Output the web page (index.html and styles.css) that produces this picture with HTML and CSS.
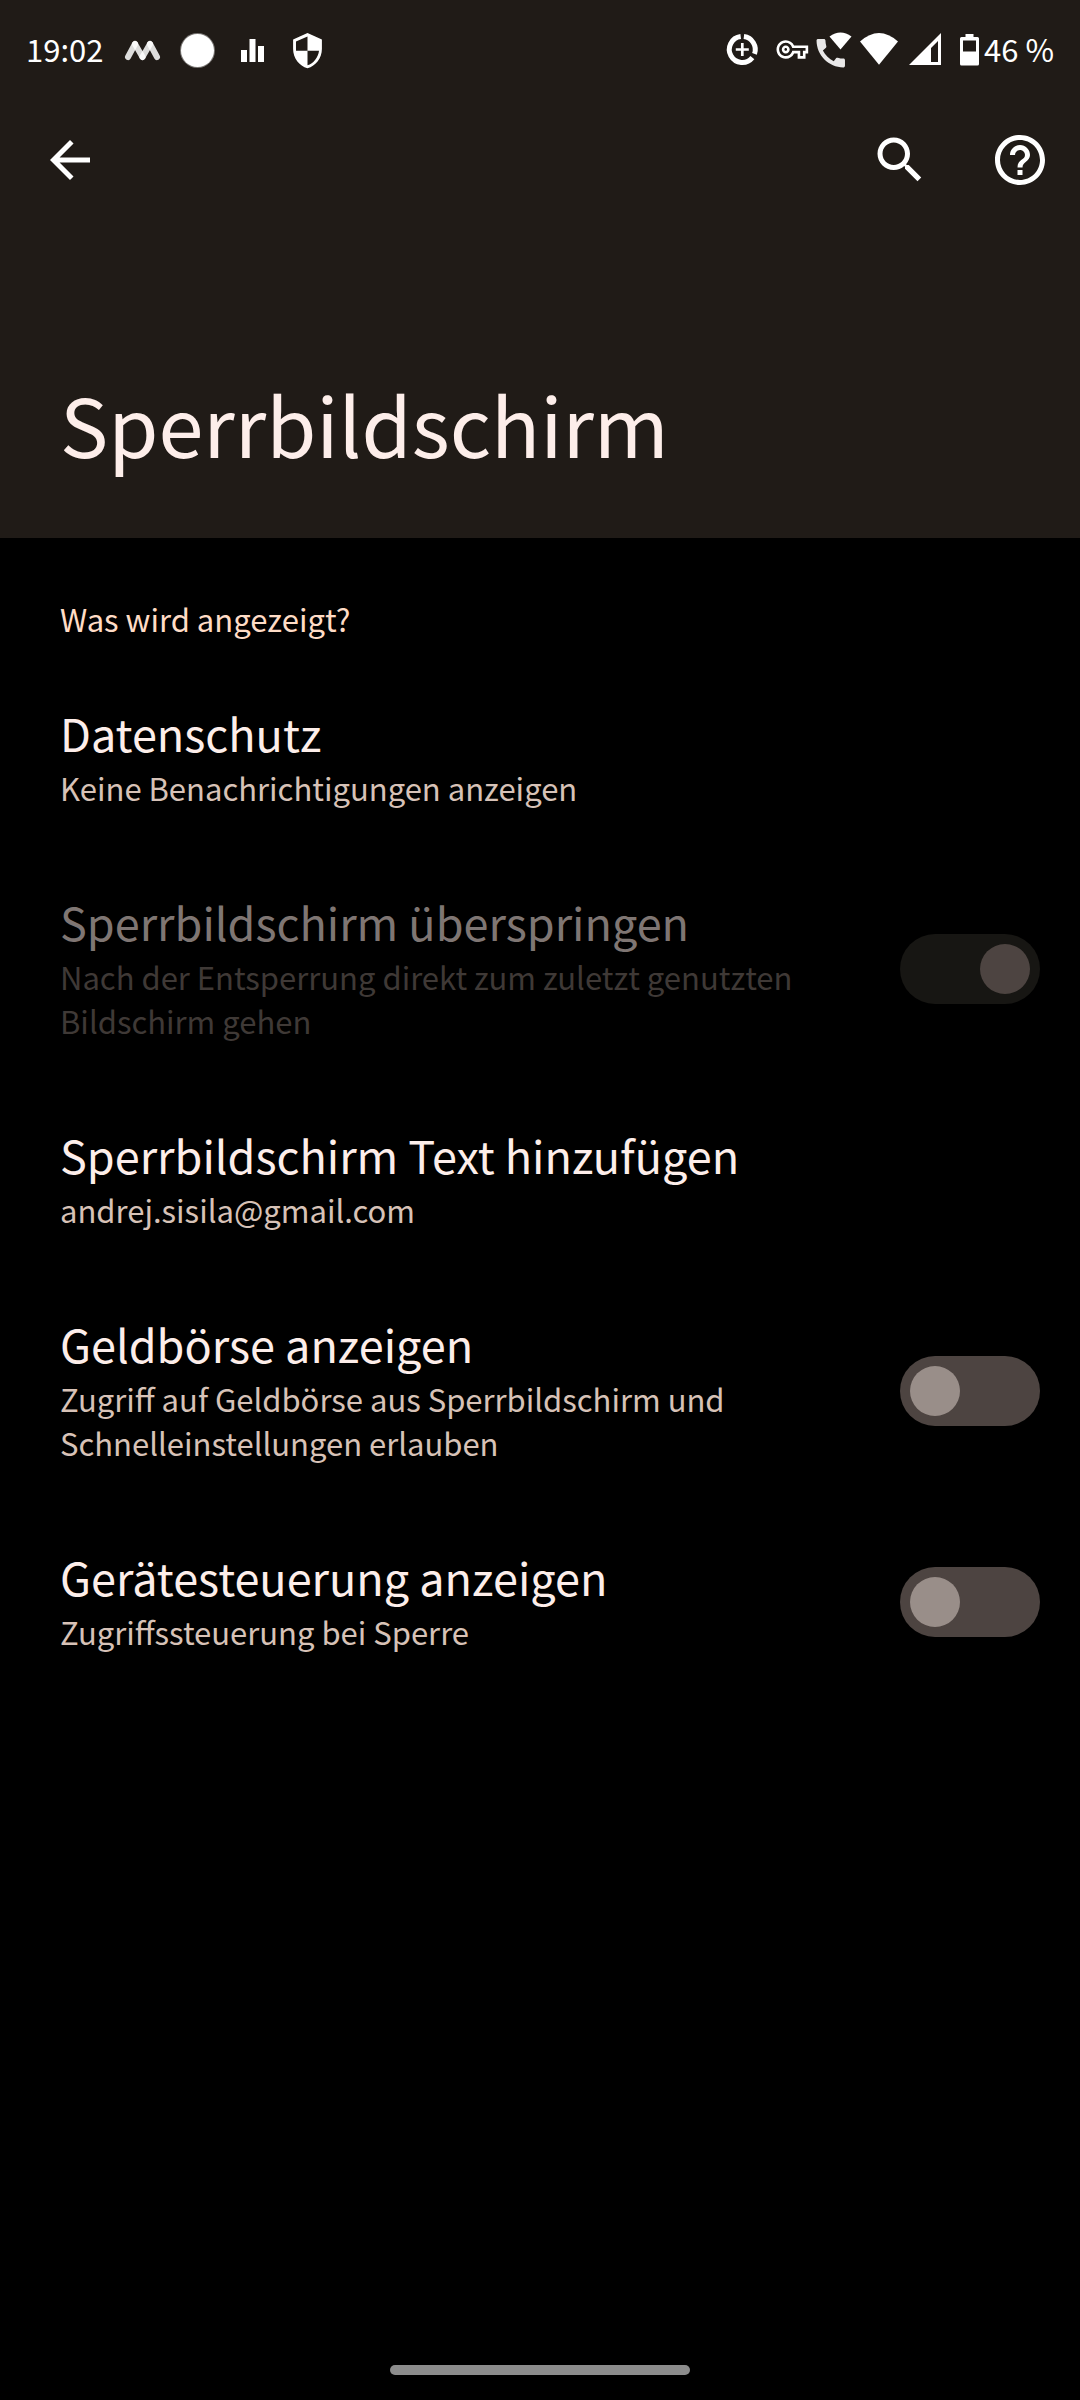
FILE: index.html
```html
<!DOCTYPE html>
<html lang="de">
<head>
<meta charset="utf-8">
<meta name="viewport" content="width=device-width">
<title>Sperrbildschirm</title>
<link rel="stylesheet" href="styles.css">
</head>
<body>
<header class="header">
  <div class="status">
    <time class="clock">19:02</time>
    <svg class="status-icon" width="55" height="44" viewBox="0 0 55 44" fill="none" stroke="#fff" stroke-width="6" stroke-linecap="round" stroke-opacity=".85"><path d="M13 29l7-13"/><path d="M20 16l7.500 13"/><path d="M27.500 29l7.500-13"/><path d="M35 16l7 13"/></svg>
    <svg class="status-icon" width="55" height="44" viewBox="0 0 55 44" fill="#fff"><circle cx="27.500" cy="22.500" r="17.500" opacity=".4"/><circle cx="27.500" cy="22.500" r="16.500"/></svg>
    <svg class="status-icon" width="55" height="44" viewBox="0 0 55 44" fill="#fff"><path d="M16 22h6v12h-6zM24.500 11h6v23h-6zM33 18h6v16h-6z"/></svg>
    <svg class="status-icon" width="55" height="44" viewBox="0 0 55 44"><g transform="translate(8.300 3.500) scale(1.6)"><path fill="#fff" fill-rule="evenodd" d="M12 1L3 5v6c0 5.550 3.840 10.740 9 12 5.160-1.260 9-6.450 9-12V5l-9-4zM12 3.100V12H4.800V6.200zM12 12h7.200c-.5 4.200-3.400 7.900-7.200 9.100z"/></g></svg>
    <span class="spacer"></span>
    <svg class="status-icon" width="50" height="44" viewBox="0 0 50 44" fill="none" stroke="#fff" stroke-width="5"><path d="M23.900 8.600A13 13 0 0 1 34.500 25.900M32.400 29.700A13 13 0 1 1 20.700 8.600"/><path stroke-width="2.700" d="M22.300 15v13M15.800 21.500h13"/></svg>
    <svg class="status-icon" width="44" height="44" viewBox="0 0 44 44" fill="#fff"><path transform="translate(6.500 5.600) scale(1.32)" d="M22 19h-6v-4h-2.680c-1.140 2.420-3.600 4-6.320 4-3.860 0-7-3.140-7-7s3.140-7 7-7c2.720 0 5.170 1.580 6.320 4H24v6h-2v4zm-4-2h2v-4h2v-2H11.940l-.23-.67C11.010 8.340 9.110 7 7 7c-2.760 0-5 2.240-5 5s2.240 5 5 5c2.110 0 4.010-1.340 4.710-3.330l.23-.67H18v4zM7 15c-1.650 0-3-1.350-3-3s1.350-3 3-3 3 1.350 3 3-1.350 3-3 3zm0-4c-.55 0-1 .45-1 1s.45 1 1 1 1-.45 1-1-.45-1-1-1z"/></svg>
    <svg class="status-icon" width="42" height="44" viewBox="0 0 42 44" fill="#fff"><path opacity=".9" transform="translate(-2.200 6.300) scale(1.58)" d="M20.010 15.380c-1.230 0-2.420-.2-3.530-.56-.35-.12-.74-.03-1.010.24l-1.570 1.970c-2.830-1.350-5.480-3.900-6.890-6.830l1.950-1.660c.27-.28.35-.67.24-1.020-.37-1.110-.56-2.300-.56-3.530 0-.54-.45-.99-.99-.99H4.190C3.650 3 3 3.240 3 3.990 3 13.280 10.730 21 20.010 21c.71 0 .99-.63.99-1.180v-3.450c0-.54-.45-.99-.99-.99z"/><path d="M26.500 21.500L15.500 8.500Q26.500 .5 37.500 8.500z"/></svg>
    <svg class="status-icon" width="46" height="44" viewBox="0 0 46 44" fill="#fff"><path d="M23 36.700L4 13.500Q23-3.500 42 13.500z"/></svg>
    <svg class="status-icon" width="46" height="44" viewBox="0 0 46 44" fill="#fff"><path fill-rule="evenodd" d="M7 37L39 5v32zM29 20v14h7V13z"/></svg>
    <svg class="status-icon" width="36" height="44" viewBox="0 0 36 44" fill="#fff"><path fill-rule="evenodd" d="M17.500 6h8v3h4q1.500 0 1.500 1.500v25.500q0 1.500-1.500 1.500h-16q-1.500 0-1.500-1.500v-25.500q0-1.500 1.500-1.500h4zM15 12.500V23.500h13V12.500z"/></svg>
    <span class="battery">46 %</span>
  </div>
  <nav class="toolbar">
    <button class="icon-button" type="button" aria-label="Zurück"><svg width="60" height="60" viewBox="0 0 24 24" fill="#fff"><path d="M20 11H7.830l5.590-5.590L12 4l-8 8 8 8 1.410-1.410L7.830 13H20v-2z"/></svg></button>
    <span class="spacer"></span>
    <button class="icon-button" type="button" aria-label="Suchen"><svg width="60" height="60" viewBox="0 0 24 24" fill="#fff"><path d="M15.500 14h-.79l-.28-.27C15.410 12.590 16 11.110 16 9.500 16 5.910 13.090 3 9.500 3S3 5.910 3 9.500 5.910 16 9.500 16c1.610 0 3.090-.59 4.230-1.570l.27.28v.79l5 4.990L20.490 19l-4.990-5zm-6 0C7.010 14 5 11.990 5 9.500S7.010 5 9.500 5 14 7.010 14 9.500 11.990 14 9.500 14z"/></svg></button>
    <button class="icon-button" type="button" aria-label="Hilfe"><svg width="60" height="60" viewBox="0 0 24 24" fill="#fff"><path d="M11 18h2v-2h-2v2zm1-16C6.480 2 2 6.480 2 12s4.480 10 10 10 10-4.480 10-10S17.520 2 12 2zm0 18c-4.410 0-8-3.590-8-8s3.590-8 8-8 8 3.590 8 8-3.590 8-8 8zm0-14c-2.210 0-4 1.790-4 4h2c0-1.100.9-2 2-2s2 .9 2 2c0 2-3 1.750-3 5h2c0-2.250 3-2.500 3-5 0-2.210-1.790-4-4-4z"/></svg></button>
  </nav>
  <h1 class="title">Sperrbildschirm</h1>
</header>
<main class="settings">
  <h2 class="section">Was wird angezeigt?</h2>
  <a class="row" href="#datenschutz">
    <span class="text"><span class="name">Datenschutz</span><span class="summary">Keine Benachrichtigungen anzeigen</span></span>
  </a>
  <label class="row row-disabled">
    <span class="text"><span class="name">Sperrbildschirm überspringen</span><span class="summary">Nach der Entsperrung direkt zum zuletzt genutzten Bildschirm gehen</span></span>
    <input class="switch" type="checkbox" role="switch" checked disabled>
  </label>
  <a class="row" href="#text">
    <span class="text"><span class="name">Sperrbildschirm Text hinzufügen</span><span class="summary">andrej.sisila@gmail.com</span></span>
  </a>
  <label class="row">
    <span class="text"><span class="name">Geldbörse anzeigen</span><span class="summary">Zugriff auf Geldbörse aus Sperrbildschirm und Schnelleinstellungen erlauben</span></span>
    <input class="switch" type="checkbox" role="switch">
  </label>
  <label class="row">
    <span class="text"><span class="name">Gerätesteuerung anzeigen</span><span class="summary">Zugriffssteuerung bei Sperre</span></span>
    <input class="switch" type="checkbox" role="switch">
  </label>
</main>
<footer class="gesture"><span class="handle"></span></footer>
</body>
</html>
```
FILE: styles.css
```css
* {
  box-sizing: border-box;
}

body {
  margin: 0;
  min-height: 100vh;
  display: flex;
  flex-direction: column;
  background: #000;
  color: #fdeeea;
  font-family: "Noto Sans CJK SC", "Noto Sans", sans-serif;
  font-size: 31px;
  line-height: 44px;
}

.header {
  background: #201b17;
  padding-bottom: 57px;
}

.status {
  display: flex;
  align-items: center;
  height: 100px;
  padding: 0 26px;
  color: #fff;
}

.clock {
  margin-right: 12px;
}

.clock,
.battery {
  padding-bottom: 2px;
}

.status-icon {
  flex: none;
}

.spacer {
  flex: 1;
}

.toolbar {
  display: flex;
  gap: 60px;
  padding: 30px 30px 0 40px;
}

.icon-button {
  display: flex;
  padding: 0;
  border: 0;
  background: none;
}

.title {
  margin: 0;
  padding: 175px 60px 0;
  font-size: 81px;
  font-weight: 400;
  line-height: 116px;
}

.settings {
  flex: 1;
}

.section {
  margin: 0;
  padding: 59px 60px 22px;
  color: #ffdcc6;
  font-size: 31px;
  font-weight: 400;
}

.row {
  display: flex;
  align-items: center;
  gap: 60px;
  padding: 42px 40px 42px 60px;
  color: #fdeeea;
  text-decoration: none;
}

.text {
  flex: 1;
  display: flex;
  flex-direction: column;
  gap: 5px;
}

.name {
  font-size: 45px;
  line-height: 56px;
}

.summary {
  color: #d7c2b7;
}

.row-disabled .name {
  color: #7f7673;
}

.row-disabled .summary {
  color: #3f3936;
}

.switch {
  appearance: none;
  flex: none;
  width: 140px;
  height: 70px;
  margin: 0;
  padding: 10px;
  display: flex;
  border-radius: 35px;
  background: #4d4441;
}

.switch::before {
  content: "";
  width: 50px;
  height: 50px;
  border-radius: 50%;
  background: #998e89;
}

.switch:checked {
  justify-content: flex-end;
}

.switch:disabled {
  background: #171613;
}

.switch:disabled::before {
  background: #4d4441;
}

.gesture {
  display: flex;
  justify-content: center;
  padding: 25px 0;
}

.handle {
  width: 300px;
  height: 10px;
  border-radius: 5px;
  background: #8c8c8c;
}
```
